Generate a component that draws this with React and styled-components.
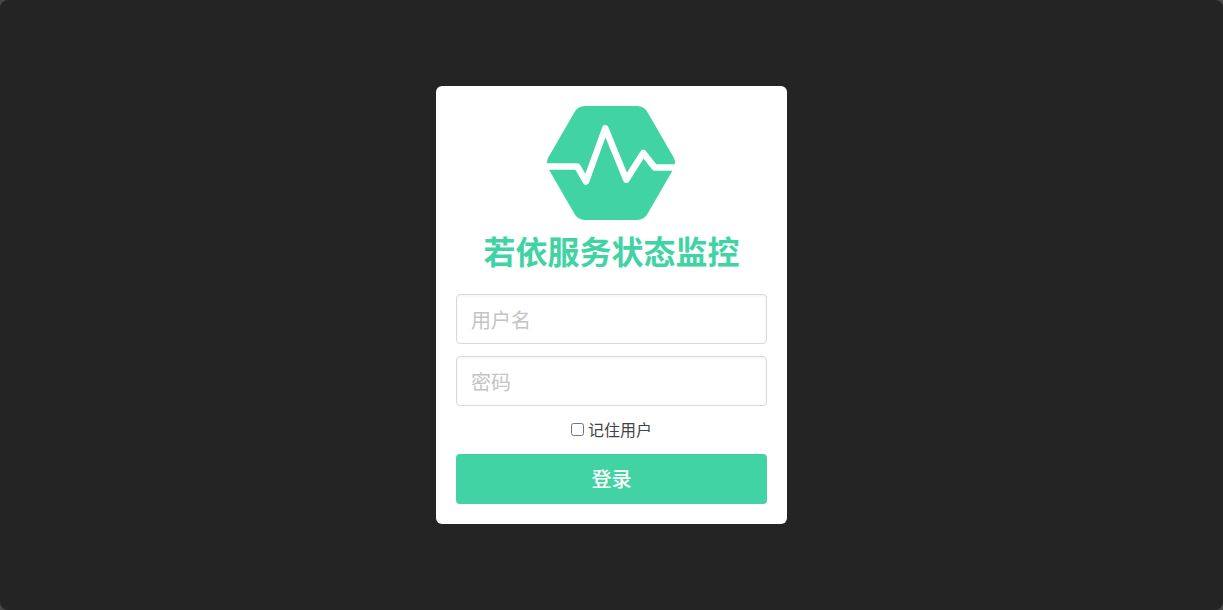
import React from 'react';
import styled, { createGlobalStyle } from 'styled-components';

const GlobalStyle = createGlobalStyle`
  *, *::before, *::after {
    box-sizing: border-box;
  }

  body {
    margin: 0;
    background: #474747;
    color: #444;
    font-family: "Noto Sans CJK SC", sans-serif;
    font-size: 16px;
    line-height: 24px;
  }
`;

const Page = styled.main`
  display: flex;
  align-items: center;
  justify-content: center;
  min-height: 100vh;
  padding: 20px 0;
  border-radius: 8px;
  background: #242424;
`;

const Card = styled.form`
  display: flex;
  flex-direction: column;
  width: 100%;
  max-width: 351px;
  padding: 20px;
  border-radius: 6px;
  background: #fff;
`;

const Logo = styled.svg`
  align-self: center;
  width: 129px;
  height: 114px;
`;

const Title = styled.h1`
  margin: 6px 0 20px;
  color: #42d3a5;
  font-size: 32px;
  font-weight: 700;
  line-height: 48px;
  text-align: center;
`;

const Fields = styled.div`
  display: flex;
  flex-direction: column;
  gap: 12px;
`;

const TextField = styled.input`
  width: 100%;
  height: 50px;
  padding: 0 14px;
  border: 1px solid #d9d9d9;
  border-radius: 4px;
  background: #fff;
  box-shadow: inset 0 1px 3px rgba(0, 0, 0, 0.06);
  color: #444;
  font-family: inherit;
  font-size: 20px;

  &::placeholder {
    color: #c4c4c4;
    opacity: 1;
  }
`;

const Remember = styled.label`
  display: flex;
  align-items: center;
  align-self: center;
  gap: 4px;
  margin: 11px 0 13px;
`;

const Checkbox = styled.input`
  width: 13px;
  height: 13px;
  margin: 0;
`;

const SubmitButton = styled.button`
  height: 50px;
  padding: 0 0 2px;
  border: 0;
  border-radius: 4px;
  background: #42d3a5;
  color: #fff;
  font-family: inherit;
  font-size: 20px;
  font-weight: 500;
  cursor: pointer;
`;

export default function App() {
  return (
    <>
      <GlobalStyle />
      <Page>
        <Card onSubmit={(event) => event.preventDefault()}>
          <Logo viewBox="0 0 129 114" aria-hidden="true">
            <path
              fill="#42d3a5"
              d="M38 0H90Q97.500 0 101 7L127 52Q129 57 127 62L101 107Q97.500 114 90 114H38Q30.500 114 27 107L1 62Q-1 57 1 52L27 7Q30.500 0 38 0Z"
            />
            <path
              fill="none"
              stroke="#fff"
              strokeWidth="6.500"
              strokeLinecap="round"
              strokeLinejoin="round"
              d="M-2 60.500H30.300L39 75.500L58.300 22.300L79.300 73.700L96.300 47L107.700 61.500H130"
            />
          </Logo>
          <Title>若依服务状态监控</Title>
          <Fields>
            <TextField type="text" name="username" placeholder="用户名" aria-label="用户名" />
            <TextField type="password" name="password" placeholder="密码" aria-label="密码" />
          </Fields>
          <Remember>
            <Checkbox type="checkbox" name="remember" />
            记住用户
          </Remember>
          <SubmitButton type="submit">登录</SubmitButton>
        </Card>
      </Page>
    </>
  );
}
